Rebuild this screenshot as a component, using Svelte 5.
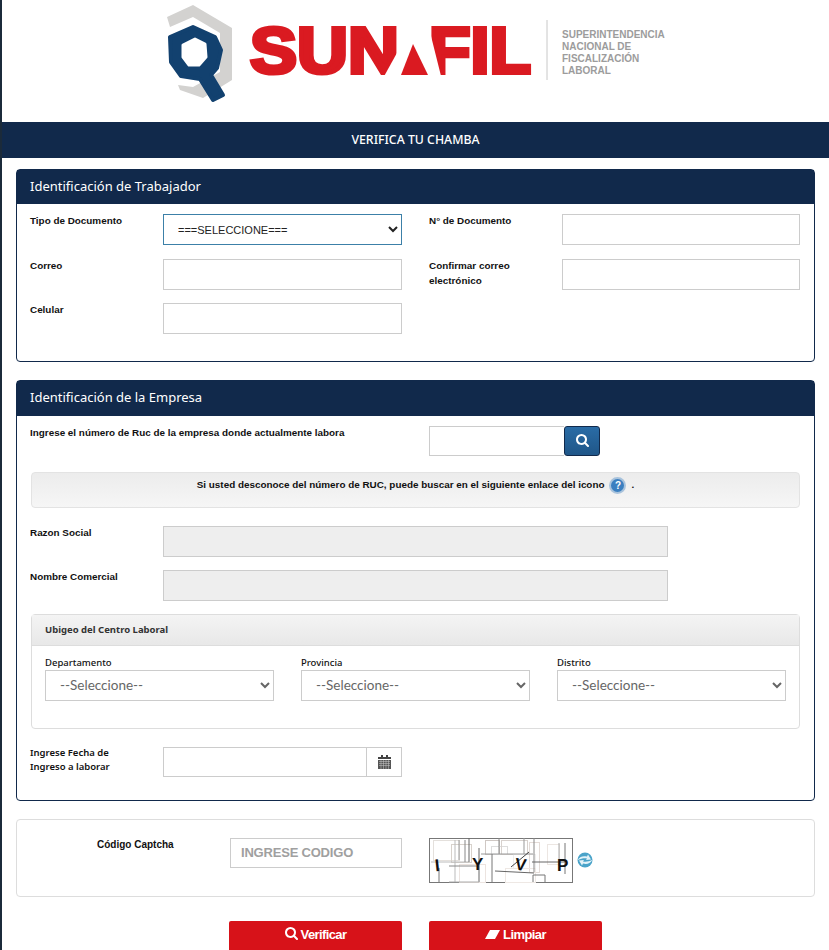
<script lang="ts">
	const searchPath =
		'M1152 704q0-185-131.5-316.5t-316.5-131.5-316.5 131.5-131.5 316.5 131.5 316.5 316.5 131.5 316.5-131.5 131.5-316.5zm512 832q0 52-38 90t-90 38q-54 0-90-38l-343-342q-179 124-399 124-143 0-273.5-55.5t-225-150-150-225-55.5-273.5 55.5-273.5 150-225 225-150 273.5-55.5 273.5 55.5 225 150 150 225 55.5 273.5q0 220-124 399l343 343q37 37 37 90z';

	const ubigeo = ['Departamento', 'Provincia', 'Distrito'];

	// pale boxes behind the captcha letters: x, y, w, h, colour
	const boxes: [number, number, number, number, string][] = [
		[4, 2, 26, 20, '#e4e0dc'],
		[22, 6, 20, 18, '#d8d2cc'],
		[30, 26, 26, 18, '#ece4e0'],
		[56, 2, 14, 14, '#cfc8c4'],
		[62, 8, 16, 8, '#ddd'],
		[72, 2, 26, 14, '#d8d2ce'],
		[84, 16, 22, 14, '#eee'],
		[100, 4, 10, 30, '#e4dcd8'],
		[118, 6, 12, 20, '#ece6e2'],
		[76, 30, 30, 14, '#eee8e4']
	];

	// dark noise lines of the captcha picture: x1, y1, x2, y2, colour
	const noise: [number, number, number, number, string][] = [
		[2, 24, 40, 24, '#bbb'],
		[26, 2, 26, 44, '#bbb'],
		[30, 2, 30, 22, '#999'],
		[36, 2, 36, 24, '#888'],
		[40, 0, 40, 24, '#666'],
		[20, 28, 50, 28, '#888'],
		[50, 10, 50, 44, '#666'],
		[10, 30, 10, 44, '#777'],
		[20, 44, 50, 44, '#aaa'],
		[70, 0, 70, 16, '#888'],
		[52, 16, 104, 16, '#999'],
		[63, 16, 63, 44, '#777'],
		[66, 33, 105, 35, '#666'],
		[105, 0, 105, 34, '#888'],
		[103, 24, 136, 24, '#666'],
		[104, 37, 104, 44, '#777'],
		[104, 37, 116, 37, '#777'],
		[116, 37, 116, 44, '#777'],
		[136, 5, 136, 36, '#777'],
		[130, 5, 130, 28, '#aaa'],
		[95, 0, 95, 16, '#999'],
		[82, 29, 100, 14, '#444']
	];
</script>

<div class="page">
	<header class="brand">
		<svg class="logo" viewBox="0 0 510 104" role="img" aria-label="SUNAFIL">
			<polygon points="2,17 28,5 67,28 67,80 38,98 15,90 13,85 28,87 55,72 55,33 28,17 5,27" fill="#d3d2d0" />
			<polygon
				points="5,37 28,27 50,37 56,50 52,68 46,75 58,95 48,100 35,79 16,76 6,62"
				fill="#12416f"
				stroke="#12416f"
				stroke-width="4"
				stroke-linejoin="round"
			/>
			<polygon
				points="30,39 18,45 18,57 24,65 34,65 41,57 40,44"
				fill="#fff"
				stroke="#fff"
				stroke-width="3"
				stroke-linejoin="round"
			/>
			<text class="word" x="85" y="73" textLength="149" lengthAdjust="spacingAndGlyphs">SUN</text>
			<text class="word" x="264" y="73" textLength="102" lengthAdjust="spacingAndGlyphs">FIL</text>
			<polygon points="238,42 244,42 244,80 217,80" fill="#fff" />
			<polygon points="258,22 263,24 277,80 258,80" fill="#fff" />
			<polygon points="236,75 248,44 263,75" fill="#da1a21" />
			<line x1="382" y1="20" x2="382" y2="80" stroke="#c8c8c8" />
			<g class="motto">
				<text x="397" y="38">SUPERINTENDENCIA</text>
				<text x="397" y="50">NACIONAL DE</text>
				<text x="397" y="62">FISCALIZACIÓN</text>
				<text x="397" y="74">LABORAL</text>
			</g>
		</svg>
	</header>

	<div class="title">VERIFICA TU CHAMBA</div>

	<section class="panel first">
		<h2>Identificación de Trabajador</h2>
		<div class="body form">
			<span class="label">Tipo de Documento</span>
			<select class="doc"><option>===SELECCIONE===</option></select>
			<span class="label">N° de Documento</span>
			<input type="text" />

			<span class="label">Correo</span>
			<input type="text" />
			<span class="label tall">Confirmar correo electrónico</span>
			<input type="text" />

			<span class="label">Celular</span>
			<input type="text" />
		</div>
	</section>

	<section class="panel second">
		<h2>Identificación de la Empresa</h2>
		<div class="body">
			<div class="ruc">
				<span class="label">Ingrese el número de Ruc de la empresa donde actualmente labora</span>
				<div class="ruc-field">
					<input type="text" />
					<button class="find" aria-label="Buscar">
						<svg viewBox="0 0 1664 1792" width="13" height="14"><path d={searchPath} fill="#fff" /></svg>
					</button>
				</div>
			</div>

			<div class="notice">
				<span>Si usted desconoce del número de RUC, puede buscar en el siguiente enlace del icono</span>
				<span class="help">?</span>
				<span>.</span>
			</div>

			<div class="company">
				<span class="label">Razon Social</span>
				<input type="text" disabled />
				<span class="label">Nombre Comercial</span>
				<input type="text" disabled />
			</div>

			<div class="ubigeo">
				<h3>Ubigeo del Centro Laboral</h3>
				<div class="places">
					{#each ubigeo as place}
						<label>
							<span>{place}</span>
							<select><option>--Seleccione--</option></select>
						</label>
					{/each}
				</div>
			</div>

			<div class="date">
				<span class="label">Ingrese Fecha de Ingreso a laborar</span>
				<div class="date-field">
					<input type="text" />
					<span class="addon">
						<svg viewBox="0 0 13 14" width="13" height="14">
							<path d="M0 2h13v2H0zM3 0h2v3H3zM8 0h2v3H8z" fill="#444" />
							<path d="M0 5h13v9H0z" fill="#555" />
							<path d="M1 6.5h11M1 8.5h11M1 10.5h11M3 5v9M5.5 5v9M8 5v9M10.5 5v9" stroke="#ccc" stroke-width=".5" />
						</svg>
					</span>
				</div>
			</div>
		</div>
	</section>

	<section class="captcha">
		<span class="captcha-label">Código Captcha</span>
		<input type="text" placeholder="INGRESE CODIGO" />
		<svg class="captcha-img" viewBox="0 0 144 45" width="144" height="45" role="img" aria-label="captcha">
			<rect x=".5" y=".5" width="143" height="44" fill="#fff" stroke="#777" />
			{#each boxes as [x, y, width, height, color]}
				<rect x={x + 0.5} y={y + 0.5} {width} {height} fill="none" stroke={color} />
			{/each}
			{#each noise as [x1, y1, x2, y2, color]}
				<line {x1} {y1} {x2} {y2} stroke={color} />
			{/each}
			<g class="captcha-chars">
				<text x="6" y="33" transform="rotate(-6 8 28)">I</text>
				<text x="43" y="32">Y</text>
				<text x="86" y="32" transform="rotate(8 90 26)">V</text>
				<text x="128" y="33">P</text>
			</g>
		</svg>
		<svg class="refresh" viewBox="0 0 16 16" width="16" height="16" aria-label="Actualizar">
			<circle cx="8" cy="8" r="7.5" fill="#4aa3c9" />
			<path d="M1 7.5c2-3 5-4 9-3l1-2 3 5-5 .5 1-1.500c-3-.5-6 0-9 1.500z" fill="#e3f2f8" />
			<path d="M15 8.500c-2 3-5 4-9 3l-1 2-3-5 5-.5-1 1.500c3 .5 6 0 9-1.500z" fill="#e3f2f8" />
		</svg>
	</section>

	<div class="actions">
		<button class="red">
			<svg viewBox="0 0 1664 1792" width="13" height="14"><path d={searchPath} fill="#fff" /></svg>
			Verificar
		</button>
		<button class="red">
			<svg viewBox="0 0 15 11" width="15" height="11"><path d="M5 1h10l-5 9H0z" fill="#fff" /></svg>
			Limpiar
		</button>
	</div>
</div>

<style>
	:global(body) {
		margin: 0;
		background: #fff;
	}

	.page {
		box-sizing: border-box;
		height: 950px;
		overflow: hidden;
		border-left: 2px solid #1b2a3a;
		font-family: 'Liberation Sans', Arial, sans-serif;
	}

	.brand {
		height: 122px;
		padding-left: 163px;
	}

	.logo {
		display: block;
		width: 510px;
		height: 104px;
	}

	.word {
		font-family: 'Liberation Sans', sans-serif;
		font-weight: 700;
		font-size: 64px;
		fill: #da1a21;
		stroke: #da1a21;
		stroke-width: 4px;
	}

	.motto text {
		font-family: 'Liberation Sans', sans-serif;
		font-weight: 700;
		font-size: 10px;
		fill: #9c9c9c;
	}

	.title {
		height: 36px;
		line-height: 35px;
		background: #11294b;
		color: #fff;
		text-align: center;
		font-family: 'Noto Sans', sans-serif;
		font-size: 12.3px;
		font-weight: 500;
	}

	.panel {
		box-sizing: border-box;
		width: 799px;
		margin-left: 14px;
		border: 1px solid #11294b;
		border-radius: 4px;
	}

	.first {
		height: 193px;
		margin-top: 11px;
	}

	.second {
		height: 421px;
		margin-top: 18px;
	}

	h2 {
		margin: 0;
		height: 35px;
		padding-left: 13px;
		background: #11294b;
		color: #fff;
		font-family: 'Noto Sans', sans-serif;
		font-size: 13px;
		font-weight: 400;
		line-height: 33px;
	}

	.first h2 {
		height: 34px;
	}

	.body {
		padding: 10px 14px 0;
	}

	.form {
		display: grid;
		grid-template-columns: 132px 239px 160px 238px;
		grid-auto-rows: 31px;
		row-gap: 13.5px;
	}

	.form .label:nth-of-type(even) {
		margin-left: 27px;
	}

	.label {
		display: block;
		margin: -1px 0 0 -1px;
		color: #111;
		font-size: 9.9px;
		font-weight: 700;
		line-height: 15px;
	}

	input,
	select {
		box-sizing: border-box;
		width: 100%;
		height: 31px;
		border: 1px solid #ccc;
		background: #fff;
		border-radius: 0;
		outline: none;
	}

	select {
		padding-left: 10px;
		padding-bottom: 2px;
		color: #666;
		font-family: Lato, sans-serif;
		font-size: 13.5px;
	}

	.doc {
		padding-bottom: 0;
		border-color: #3c80a8;
		color: #222;
		font-family: 'Liberation Sans', sans-serif;
		font-size: 11px;
	}

	.ruc {
		display: grid;
		grid-template-columns: 398px 171px;
		height: 30px;
	}

	.ruc-field {
		display: flex;
		height: 30px;
	}

	.ruc-field input {
		flex: 1;
		width: auto;
		min-width: 0;
		height: 30px;
		border-right: 0;
	}

	.find {
		flex: none;
		display: grid;
		place-items: center;
		width: 36px;
		height: 30px;
		padding: 0;
		border: 1px solid #11294b;
		border-radius: 3px;
		background: linear-gradient(#2a6ca6, #1f5688);
	}

	.notice {
		box-sizing: border-box;
		display: flex;
		justify-content: center;
		gap: 4px;
		height: 36px;
		margin-top: 16px;
		padding-top: 4px;
		border: 1px solid #e3e3e3;
		border-radius: 4px;
		background: linear-gradient(#ececec, #f6f6f6);
		color: #111;
		font-size: 9.9px;
		font-weight: 700;
		line-height: 16px;
	}

	.help {
		width: 13px;
		height: 13px;
		margin: 0 1px;
		border: 2px solid #a9c3dc;
		border-radius: 50%;
		background: #3b7fc0;
		color: #fff;
		font-size: 10px;
		line-height: 13px;
		text-align: center;
	}

	.company {
		display: grid;
		grid-template-columns: 132px 505px;
		grid-auto-rows: 31px;
		row-gap: 13px;
		margin-top: 18px;
	}

	.company input {
		background: #eee;
	}

	.ubigeo {
		box-sizing: border-box;
		height: 115px;
		margin-top: 13px;
		border: 1px solid #ddd;
		border-radius: 4px;
	}

	h3 {
		margin: 0;
		height: 30px;
		padding-left: 13px;
		border-bottom: 1px solid #ddd;
		background: linear-gradient(#f4f4f4, #e8e8e8);
		color: #333;
		font-family: 'Noto Sans', sans-serif;
		font-size: 9.5px;
		font-weight: 700;
		line-height: 29px;
	}

	.places {
		display: grid;
		grid-template-columns: repeat(3, 229px);
		column-gap: 27px;
		padding: 10px 13px 0;
	}

	.places span {
		display: block;
		height: 14px;
		color: #111;
		font-family: 'Noto Sans', sans-serif;
		font-size: 9.5px;
		font-weight: 500;
		line-height: 13px;
	}

	.date {
		display: grid;
		grid-template-columns: 132px 239px;
		margin-top: 18px;
	}

	.date .label {
		width: 95px;
		font-family: 'Noto Sans', sans-serif;
		font-size: 9.5px;
		font-weight: 600;
		line-height: 14px;
	}

	.date-field {
		display: flex;
		height: 30px;
	}

	.date-field input {
		flex: 1;
		width: auto;
		min-width: 0;
		height: 30px;
	}

	.addon {
		flex: none;
		display: grid;
		place-items: center;
		box-sizing: border-box;
		width: 35px;
		border: 1px solid #ccc;
		border-left: 0;
	}

	.captcha {
		box-sizing: border-box;
		display: flex;
		align-items: flex-start;
		width: 799px;
		height: 78px;
		margin: 18px 0 0 14px;
		padding-top: 18px;
		border: 1px solid #ddd;
		border-radius: 4px;
	}

	.captcha-label {
		width: 213px;
		padding: 1px 0 0 80px;
		box-sizing: border-box;
		color: #111;
		font-size: 10px;
		font-weight: 700;
	}

	.captcha input {
		width: 172px;
		height: 30px;
		padding: 0 0 2px 10px;
		font-family: 'Liberation Sans', sans-serif;
		font-size: 13px;
		font-weight: 700;
		letter-spacing: -0.2px;
	}

	.captcha input::placeholder {
		color: #a0a0a0;
		opacity: 1;
	}

	.captcha-img {
		margin-left: 27px;
	}

	.captcha-chars text {
		font-family: 'Liberation Sans', sans-serif;
		font-size: 17px;
		font-weight: 700;
		fill: #111;
	}

	.refresh {
		margin: 14px 0 0 4px;
	}

	.actions {
		display: flex;
		gap: 27px;
		margin: 24px 0 0 227px;
	}

	.red {
		display: flex;
		align-items: center;
		justify-content: center;
		gap: 3px;
		width: 173px;
		height: 34px;
		padding: 0 0 8px;
		border: 0;
		border-radius: 2px;
		background: #d71219;
		color: #fff;
		font-family: 'Liberation Sans', sans-serif;
		font-size: 13px;
		font-weight: 700;
		letter-spacing: -0.6px;
	}
</style>
